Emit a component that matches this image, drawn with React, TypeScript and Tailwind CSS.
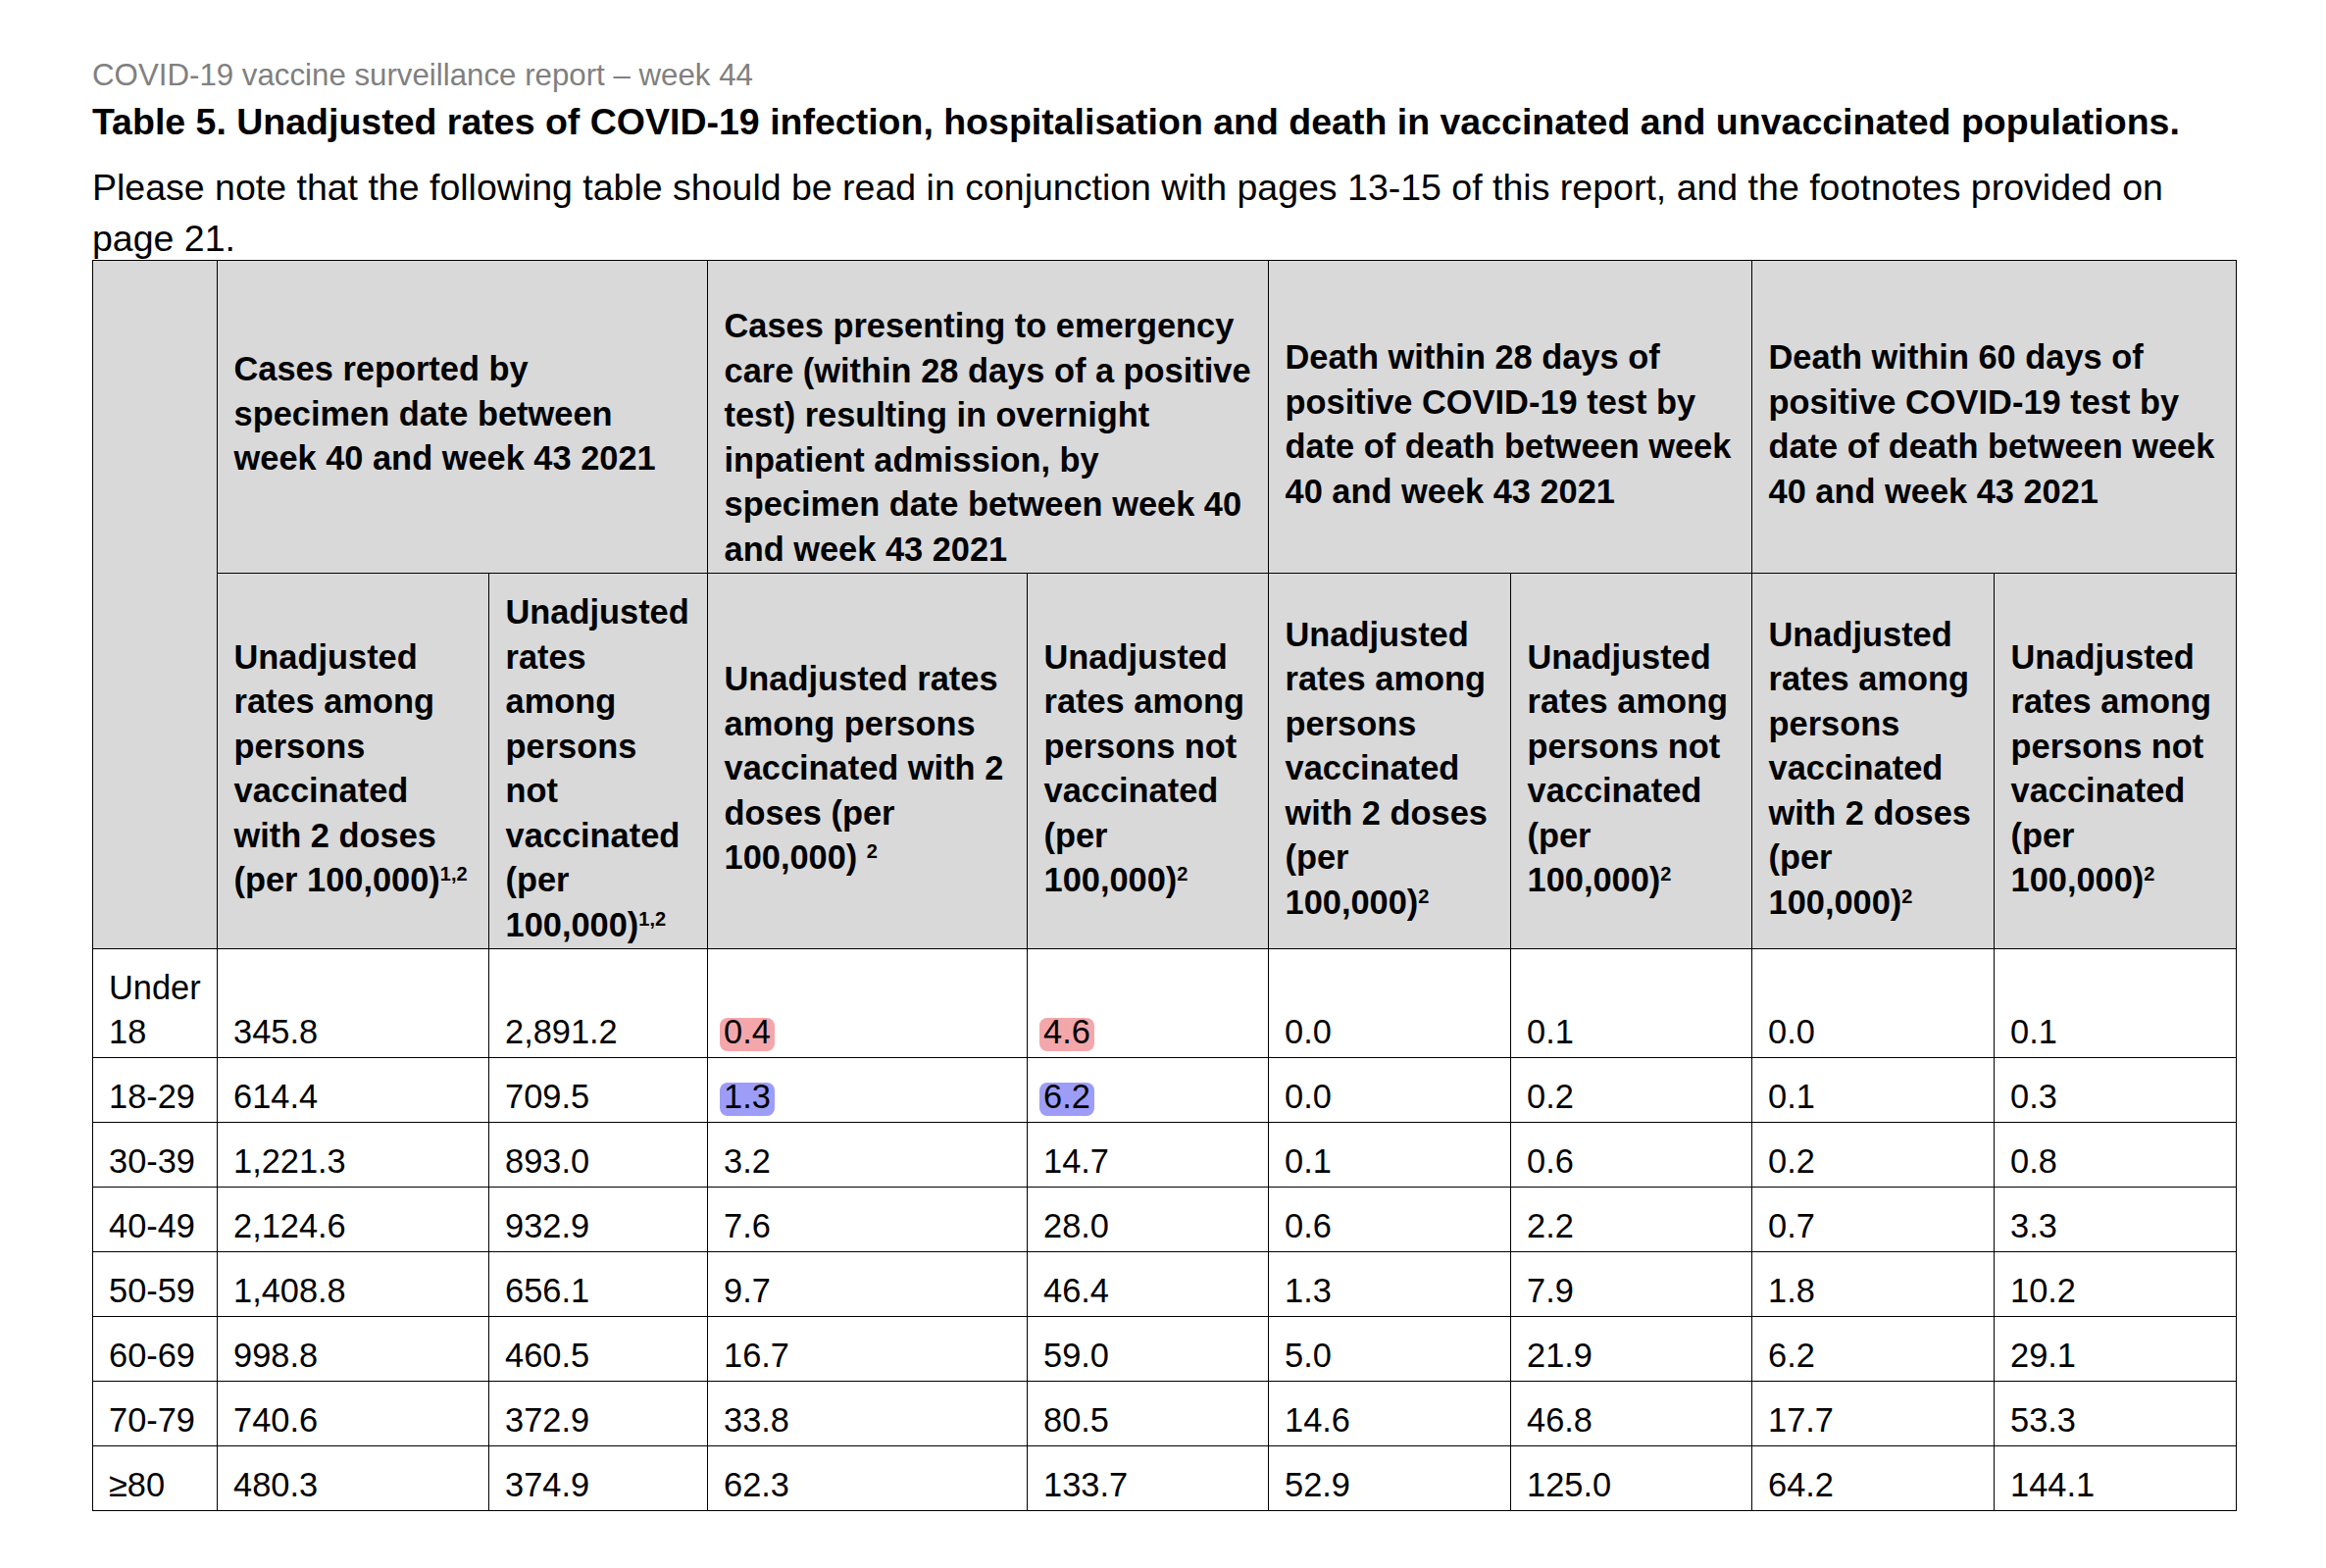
import React from "react";

type Cell = string | { h: "p" | "b"; v: string };

const data: Cell[][] = [
  ["Under\n18", "345.8", "2,891.2", { h: "p", v: "0.4" }, { h: "p", v: "4.6" }, "0.0", "0.1", "0.0", "0.1"],
  ["18-29", "614.4", "709.5", { h: "b", v: "1.3" }, { h: "b", v: "6.2" }, "0.0", "0.2", "0.1", "0.3"],
  ["30-39", "1,221.3", "893.0", "3.2", "14.7", "0.1", "0.6", "0.2", "0.8"],
  ["40-49", "2,124.6", "932.9", "7.6", "28.0", "0.6", "2.2", "0.7", "3.3"],
  ["50-59", "1,408.8", "656.1", "9.7", "46.4", "1.3", "7.9", "1.8", "10.2"],
  ["60-69", "998.8", "460.5", "16.7", "59.0", "5.0", "21.9", "6.2", "29.1"],
  ["70-79", "740.6", "372.9", "33.8", "80.5", "14.6", "46.8", "17.7", "53.3"],
  ["\u226580", "480.3", "374.9", "62.3", "133.7", "52.9", "125.0", "64.2", "144.1"],
];

function Sup({ children }: { children: React.ReactNode }) {
  return <span className="text-[20px] leading-none align-[11px]">{children}</span>;
}

function Lines({ lines, sup, supSpace }: { lines: string[]; sup?: string; supSpace?: boolean }) {
  return (
    <div>
      {lines.map((l, i) => (
        <React.Fragment key={i}>
          {l}
          {i === lines.length - 1 && sup ? (
            <>
              {supSpace ? " " : null}
              <Sup>{sup}</Sup>
            </>
          ) : null}
          {i < lines.length - 1 ? <br /> : null}
        </React.Fragment>
      ))}
    </div>
  );
}

const hd1 = "bg-[#d9d9d9] font-bold text-[34.4px] leading-[45.5px] text-black pl-[16.5px] col-span-2";
const hd2 = "bg-[#d9d9d9] font-bold text-[34.4px] leading-[45.5px] text-black pl-[16.5px] pt-[16px] flex flex-col justify-center";
const dc = "bg-white flex flex-col justify-end pl-[16px] pb-[2.5px] text-[34.4px] leading-[45.5px] text-black";

function Value({ c }: { c: Cell }) {
  if (typeof c === "string") {
    const parts = c.split("\n");
    return (
      <div>
        {parts.map((p, i) => (
          <React.Fragment key={i}>
            {p}
            {i < parts.length - 1 ? <br /> : null}
          </React.Fragment>
        ))}
      </div>
    );
  }
  const bg = c.h === "p" ? "bg-[#f4a7ab]" : "bg-[#9d9df7]";
  return (
    <div>
      <span className={`inline-block ${bg} rounded-[8px] px-[4px] -mx-[4px] leading-[28px] pb-[6px]`}>{c.v}</span>
    </div>
  );
}

export default function App() {
  return (
    <div className="min-h-screen w-full bg-white text-black font-['Liberation_Sans',Arial,sans-serif]">
      <div className="pl-[94px] pt-[58.5px] pb-[59px]">
        <div className="text-[31.25px] leading-[36px] text-[#808080]">
          COVID-19 vaccine surveillance report – week 44
        </div>
        <div className="mt-[8.7px] text-[37.5px] leading-[43px] font-bold whitespace-nowrap">
          Table 5. Unadjusted rates of COVID-19 infection, hospitalisation and death in vaccinated and unvaccinated populations.
        </div>
        <div className="mt-[20px] text-[37.5px] leading-[51.7px] w-[2190px]">
          Please note that the following table should be read in conjunction with pages 13-15 of this report, and the footnotes provided on
          <br />
          page 21.
        </div>
        <div className="-mt-[4.6px] w-[2187px] bg-black p-px gap-px grid grid-cols-[126px_276px_222px_325px_245px_246px_245px_246px_246px] grid-rows-[318px_382px_110px_repeat(7,65px)]">
          <div className="bg-[#d9d9d9] row-span-2" />
          <div className={`${hd1} pt-[88px]`}>
            <Lines lines={["Cases reported by", "specimen date between", "week 40 and week 43 2021"]} />
          </div>
          <div className={`${hd1} pt-[44px]`}>
            <Lines
              lines={[
                "Cases presenting to emergency",
                "care (within 28 days of a positive",
                "test) resulting in overnight",
                "inpatient admission, by",
                "specimen date between week 40",
                "and week 43 2021",
              ]}
            />
          </div>
          <div className={`${hd1} pt-[76px]`}>
            <Lines
              lines={["Death within 28 days of", "positive COVID-19 test by", "date of death between week", "40 and week 43 2021"]}
            />
          </div>
          <div className={`${hd1} pt-[76px]`}>
            <Lines
              lines={["Death within 60 days of", "positive COVID-19 test by", "date of death between week", "40 and week 43 2021"]}
            />
          </div>

          <div className={hd2}>
            <Lines
              lines={["Unadjusted", "rates among", "persons", "vaccinated", "with 2 doses", "(per 100,000)"]}
              sup="1,2"
            />
          </div>
          <div className={hd2}>
            <Lines
              lines={["Unadjusted", "rates", "among", "persons", "not", "vaccinated", "(per", "100,000)"]}
              sup="1,2"
            />
          </div>
          <div className={hd2}>
            <Lines
              lines={["Unadjusted rates", "among persons", "vaccinated with 2", "doses (per", "100,000)"]}
              sup="2"
              supSpace
            />
          </div>
          <div className={hd2}>
            <Lines lines={["Unadjusted", "rates among", "persons not", "vaccinated", "(per", "100,000)"]} sup="2" />
          </div>
          <div className={hd2}>
            <Lines
              lines={["Unadjusted", "rates among", "persons", "vaccinated", "with 2 doses", "(per", "100,000)"]}
              sup="2"
            />
          </div>
          <div className={hd2}>
            <Lines lines={["Unadjusted", "rates among", "persons not", "vaccinated", "(per", "100,000)"]} sup="2" />
          </div>
          <div className={hd2}>
            <Lines
              lines={["Unadjusted", "rates among", "persons", "vaccinated", "with 2 doses", "(per", "100,000)"]}
              sup="2"
            />
          </div>
          <div className={hd2}>
            <Lines lines={["Unadjusted", "rates among", "persons not", "vaccinated", "(per", "100,000)"]} sup="2" />
          </div>

          {data.map((row, ri) =>
            row.map((c, ci) => (
              <div key={`${ri}-${ci}`} className={dc}>
                <Value c={c} />
              </div>
            ))
          )}
        </div>
      </div>
    </div>
  );
}
